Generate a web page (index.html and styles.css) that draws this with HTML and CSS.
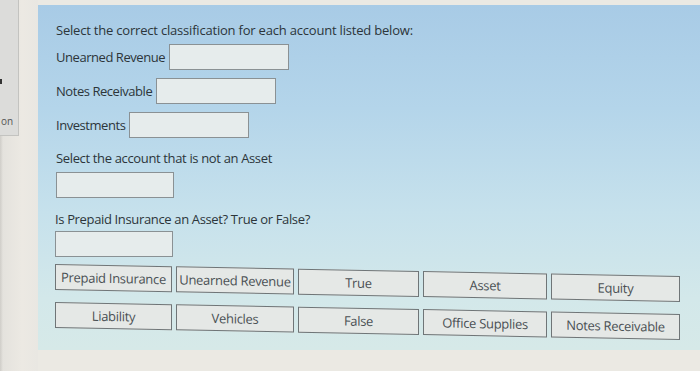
FILE: index.html
```html
<!DOCTYPE html>
<html>
<head>
<meta charset="utf-8">
<link rel="stylesheet" href="styles.css">
</head>
<body>
<div class="page">
  <div class="side">
    <div class="side-panel">
      <span class="side-mark"></span>
      <span class="side-text">on</span>
    </div>
  </div>
  <div class="main">
    <p class="title">Select the correct classification for each account listed below:</p>
    <div class="field f1"><span class="label">Unearned Revenue</span><span class="box w120"></span></div>
    <div class="field f2"><span class="label">Notes Receivable</span><span class="box w120"></span></div>
    <div class="field f2"><span class="label">Investments</span><span class="box w120"></span></div>
    <p class="question q1">Select the account that is not an Asset</p>
    <span class="box solo w118 b1"></span>
    <p class="question q2">Is Prepaid Insurance an Asset? True or False?</p>
    <span class="box solo w118 b2"></span>
    <div class="bank">
      <div class="chip">Prepaid Insurance</div>
      <div class="chip">Unearned Revenue</div>
      <div class="chip">True</div>
      <div class="chip">Asset</div>
      <div class="chip">Equity</div>
      <div class="chip">Liability</div>
      <div class="chip">Vehicles</div>
      <div class="chip">False</div>
      <div class="chip">Office Supplies</div>
      <div class="chip">Notes Receivable</div>
    </div>
  </div>
</div>
</body>
</html>
```
FILE: styles.css
```css
html, body {
  margin: 0;
  padding: 0;
}
body {
  width: 700px;
  height: 371px;
  overflow: hidden;
  background: #ebe9e3;
  font-family: "Open Sans", "Noto Sans", sans-serif;
  color: #2c353a;
}
.page {
  display: flex;
  height: 371px;
}
.side {
  width: 38px;
  flex: none;
  background: linear-gradient(90deg, #cfcdc8 0, #e4e2dd 3px, #ece9e3 22px, #e9e7e2 38px);
}
.side-panel {
  position: relative;
  width: 19px;
  height: 136px;
  background: #dcdcda;
  border: 1px solid #c3c3c0;
  border-left: none;
  border-top: none;
  box-sizing: border-box;
}
.side-mark {
  position: absolute;
  left: 0;
  top: 79px;
  width: 2px;
  height: 5px;
  background: #333;
}
.side-text {
  position: absolute;
  left: 1px;
  top: 114px;
  font-size: 10px;
  color: #555;
}
.main {
  flex: 1;
  margin-top: 5px;
  height: 345px;
  box-sizing: border-box;
  padding: 15px 0 0 17px;
  background:
    linear-gradient(180deg, #a8cbe6 0%, #b4d5ea 30%, #c6e1ec 60%, #d3e8ea 85%, #d6e9e8 100%);
  display: flex;
  flex-direction: column;
  align-items: flex-start;
}
.title {
  margin: 0 0 0 1px;
  font-size: 13px;
  line-height: 20px;
  letter-spacing: -0.2px;
}
.field {
  display: flex;
  align-items: center;
  gap: 4px;
  margin-left: 1px;
}
.f1 { margin-top: 4px; }
.f2 { margin-top: 8px; }
.label {
  font-size: 13px;
  letter-spacing: -0.45px;
}
.box {
  display: block;
  height: 26px;
  box-sizing: border-box;
  background: #e6ecec;
  border: 1px solid #8a9194;
}
.w120 { width: 120px; }
.w118 { width: 118px; }
.question {
  margin: 10px 0 0 1px;
  font-size: 13px;
  line-height: 20px;
  letter-spacing: -0.35px;
}
.q2 { margin-top: 11px; margin-left: 0; }
.b1 { margin-top: 4px; margin-left: 1px; }
.b2 { margin-top: 2px; }
.bank {
  margin-top: 7px;
  display: grid;
  grid-template-columns: 117px 118px 121px 124px 129px;
  grid-auto-rows: 26px;
  column-gap: 4px;
  row-gap: 12px;
  transform: skewY(1.1deg);
  transform-origin: left top;
}
.chip {
  display: flex;
  align-items: center;
  justify-content: center;
  box-sizing: border-box;
  background: #e5e8e6;
  border: 1px solid #6f7577;
  font-size: 13px;
  letter-spacing: -0.3px;
  color: #4a5054;
  white-space: nowrap;
  overflow: hidden;
}
```
